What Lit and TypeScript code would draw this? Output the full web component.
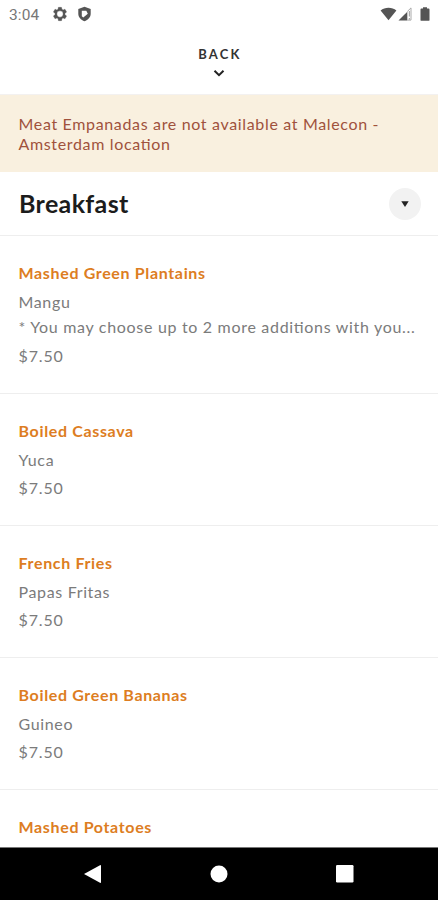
import { LitElement, html, css, nothing } from "lit";
import { customElement, property } from "lit/decorators.js";

interface Dish {
  name: string;
  local?: string;
  note?: string;
  price?: string;
}

const DISHES: Dish[] = [
  {
    name: "Mashed Green Plantains",
    local: "Mangu",
    note: "* You may choose up to 2 more additions with you...",
    price: "$7.50",
  },
  { name: "Boiled Cassava", local: "Yuca", price: "$7.50" },
  { name: "French Fries", local: "Papas Fritas", price: "$7.50" },
  { name: "Boiled Green Bananas", local: "Guineo", price: "$7.50" },
  { name: "Mashed Potatoes" },
];

@customElement("status-bar")
class StatusBar extends LitElement {
  static styles = css`
    :host {
      display: flex;
      align-items: center;
      height: 28px;
      padding: 0 8px 0 9px;
      color: #555;
      flex: none;
    }
    .time {
      font: 400 15.5px/28px Roboto, sans-serif;
      letter-spacing: 0.1px;
      color: #777;
      width: 43px;
      padding-top: 1px;
    }
    svg { display: block; fill: currentColor; flex: none; }
    .shield { margin-left: 9px; }
    .gap { flex: 1; }
    .signal { margin-left: 1px; }
    .battery { margin-left: 8px; }
  `;
  render() {
    return html`
      <span class="time">3:04</span>
      <svg width="16" height="16" viewBox="0 0 24 24">
        <path fill-rule="evenodd" stroke="currentColor" stroke-width=".5" d="M19.4 13c.1-.3.1-.7.1-1s0-.7-.1-1l2.2-1.700c.2-.1.2-.4.100-.6l-2-3.500c-.1-.2-.4-.3-.6-.2l-2.500 1a7 7 0 0 0-1.700-1L14.400 2.400a.5.5 0 0 0-.5-.4h-4a.5.5 0 0 0-.5.4L9.100 5a7 7 0 0 0-1.700 1l-2.500-1c-.2-.1-.5 0-.6.2l-2 3.500c-.1.2 0 .5.100.6L4.600 11a8 8 0 0 0 0 2l-2.200 1.700c-.2.1-.2.4-.1.6l2 3.500c.1.2.4.3.6.2l2.500-1a7 7 0 0 0 1.700 1l.4 2.600c0 .2.200.4.500.4h4c.2 0 .5-.2.5-.4l.4-2.600a7 7 0 0 0 1.700-1l2.500 1c.2.1.5 0 .6-.2l2-3.500c.1-.2.1-.5-.1-.6zM12 16.700a4.700 4.700 0 1 1 0-9.400 4.700 4.700 0 0 1 0 9.400z"/>
      </svg>
      <svg class="shield" width="15" height="16" viewBox="0 0 15 16">
        <path fill-rule="evenodd" d="M7.500 .7 13.700 3v4.800c0 3.500-2.600 6.300-6.200 7.500C3.900 14.100 1.300 11.300 1.300 7.800V3zM4.800 4.700v5.600l1.500 1.200L10.800 7.700 9.300 4.700z"/>
      </svg>
      <span class="gap"></span>
      <svg width="17" height="14" viewBox="0 0 17 14">
        <path d="M8.500 13.200.6 3.400C2.800 1.600 5.500.7 8.500.7s5.700.9 7.900 2.700z"/>
      </svg>
      <svg class="signal" width="14" height="14" viewBox="0 0 14 14">
        <path d="M.5 13.500 9.300 4.700v8.800z"/>
        <path d="M9.300 4.500 13 .9v12.200H9.300" fill="none" stroke="#aaa" stroke-width="1"/>
        <path d="M10.800 4h1.200v5.500h-1.200zM10.800 11h1.200v1.500h-1.200z" opacity=".5"/>
      </svg>
      <svg class="battery" width="10" height="14" viewBox="0 0 10 14">
        <path d="M3 .2h4v1.300h1.600q.9 0 .9.900v10.500q0 .9-.9.900H1.400q-.9 0-.9-.9V2.400q0-.9.900-.9H3z"/>
      </svg>
    `;
  }
}

@customElement("dish-row")
class DishRow extends LitElement {
  @property({ attribute: false }) dish!: Dish;
  static styles = css`
    :host {
      display: block;
      box-sizing: border-box;
      padding: 22px 18px 23px 18.5px;
      border-bottom: 1px solid #eee;
      font-size: 16px;
      letter-spacing: 0.65px;
      color: #7b7b7b;
    }
    .line {
      height: 29px;
      line-height: 29px;
      white-space: nowrap;
    }
    .name { font-weight: 700; color: #dd7d22; }
    .local { height: 28px; }
    .note { height: 26px; line-height: 23px; letter-spacing: 0.69px; }
    .price { letter-spacing: 0.85px; }
  `;
  render() {
    const d = this.dish;
    return html`
      <div class="line name">${d.name}</div>
      ${d.local ? html`<div class="line local">${d.local}</div>` : nothing}
      ${d.note ? html`<div class="line note">${d.note}</div>` : nothing}
      ${d.price ? html`<div class="line price">${d.price}</div>` : nothing}
    `;
  }
}

@customElement("app-root")
class AppRoot extends LitElement {
  static styles = css`
    :host {
      display: flex;
      flex-direction: column;
      height: 900px;
      overflow: hidden;
      background: #fff;
      font-family: Lato, sans-serif;
      font-feature-settings: "liga" 1;
    }
    .back {
      flex: none;
      height: 67px;
      box-sizing: border-box;
      padding-top: 16px;
      display: flex;
      flex-direction: column;
      align-items: center;
      border-bottom: 1px solid #f3f1f0;
      color: #333;
      font-size: 13px;
      line-height: 20px;
      font-weight: 700;
      letter-spacing: 2.2px;
    }
    .label { padding-left: 2px; }
    .back svg { margin-top: 5px; }
    .notice {
      flex: none;
      height: 77px;
      box-sizing: border-box;
      padding: 19px 19px 0 18.5px;
      background: #f9f0df;
      color: #a0523c;
      font-size: 16px;
      line-height: 20px;
      letter-spacing: 0.66px;
    }
    .section {
      flex: none;
      display: flex;
      align-items: center;
      justify-content: space-between;
      height: 64px;
      box-sizing: border-box;
      padding: 0 17px 0 19px;
      border-bottom: 1px solid #eee;
    }
    h1 { margin: 0; padding-bottom: 2px; font-size: 25px; line-height: 30px; font-weight: 700; color: #1c1c1c; letter-spacing: 0.35px; }
    .toggle {
      width: 32px;
      height: 32px;
      border-radius: 50%;
      background: #f2f2f2;
      display: flex;
      align-items: center;
      justify-content: center;
    }
    .list { flex: 1; min-height: 0; overflow: hidden; }
    .nav {
      flex: none;
      height: 53px;
      box-sizing: border-box;
      background: #000;
      border-top: 1px solid #777;
      display: grid;
      grid-template-columns: repeat(3, 126px);
      justify-content: center;
      align-items: center;
      justify-items: center;
    }
    svg { display: block; }
  `;
  render() {
    return html`
      <status-bar></status-bar>
      <div class="back">
        <span class="label">BACK</span>
        <svg width="12" height="8" viewBox="0 0 12 8">
          <path d="M1.500 1.700 6 6.200l4.500-4.500" fill="none" stroke="#222" stroke-width="2"/>
        </svg>
      </div>
      <div class="notice">Meat Empanadas are not available at Malecon - Amsterdam location</div>
      <div class="section">
        <h1>Breakfast</h1>
        <span class="toggle">
          <svg width="8" height="6" viewBox="0 0 8 6"><path d="M.3.3h7.400L4 6z" fill="#222"/></svg>
        </span>
      </div>
      <div class="list">${DISHES.map((d) => html`<dish-row .dish=${d}></dish-row>`)}</div>
      <div class="nav">
        <svg width="20" height="20" viewBox="0 0 20 20"><path d="M1 10 17 1.200q1-.4 1 .6v16.400q0 1-1 .6z" fill="#fff"/></svg>
        <svg width="18" height="18" viewBox="0 0 18 18"><circle cx="9" cy="9" r="8.500" fill="#fff"/></svg>
        <svg width="18" height="18" viewBox="0 0 18 18"><rect width="17.500" height="17.500" rx="1.200" fill="#fff"/></svg>
      </div>
    `;
  }
}
